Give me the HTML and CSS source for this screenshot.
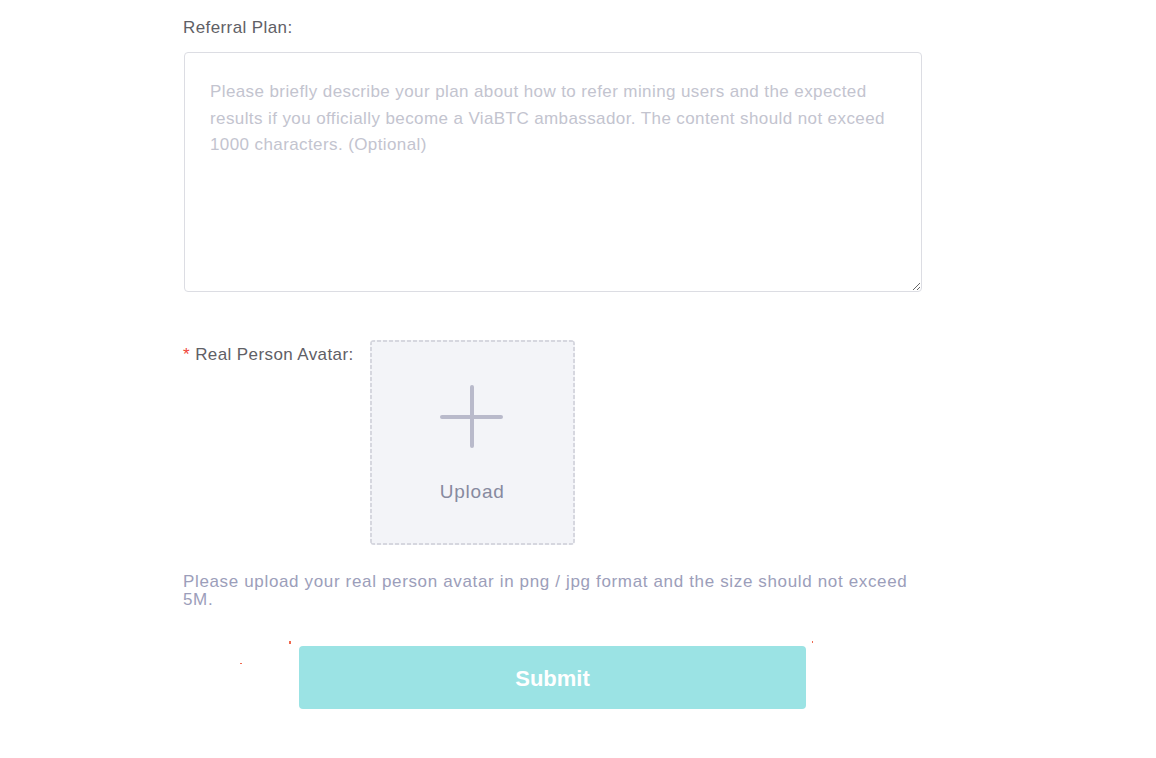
FILE: index.html
```html
<!DOCTYPE html>
<html>
<head>
<meta charset="utf-8">
<link rel="stylesheet" href="styles.css">
</head>
<body>
<div class="form">
  <div class="field">
    <div class="label">Referral Plan:</div>
    <textarea class="plan" placeholder="Please briefly describe your plan about how to refer mining users and the expected results if you officially become a ViaBTC ambassador. The content should not exceed 1000 characters. (Optional)"></textarea>
  </div>
  <div class="avatar-row">
    <div class="label"><span class="req">*</span> Real Person Avatar:</div>
    <div class="upload">
      <svg class="plus" width="64" height="64" viewBox="0 0 64 64"><path d="M32 2 V61 M2 32 H61" stroke="#b9bacb" stroke-width="4" stroke-linecap="round" fill="none"/></svg>
      <div class="upload-text">Upload</div>
    </div>
  </div>
  <p class="hint">Please upload your real person avatar in png / jpg format and the size should not exceed 5M.</p>
  <div class="actions">
    <span class="dot d1"></span><span class="dot d2"></span><span class="dot d3"></span><span class="dot d4"></span>
    <button class="submit">Submit</button>
  </div>
</div>
</body>
</html>
```
FILE: styles.css
```css
html, body { margin: 0; padding: 0; background: #fff; }
body { font-family: "Liberation Sans", Arial, sans-serif; }
.form { width: 738px; margin-left: 183px; padding-top: 17px; }
.label { font-size: 17px; letter-spacing: 0.4px; color: #5f6066; line-height: 22px; }
.field .label { margin-bottom: 13px; }
.plan {
  display: block; box-sizing: border-box; width: 738px; height: 240px;
  margin-left: 1px; border: 1px solid #dcdde3; border-radius: 4px;
  padding: 26px 25px; font-family: inherit; font-size: 17px; letter-spacing: 0.4px; line-height: 26.5px;
  color: #333; resize: vertical; outline: none;
}
.plan::placeholder { color: #c3c4cf; }
.avatar-row { display: flex; align-items: flex-start; margin-top: 48px; gap: 16px; }
.avatar-row .label { margin-top: 4px; }
.req { color: #f0443a; }
.upload {
  box-sizing: border-box; width: 205px; height: 205px; border-radius: 4px;
  background-color: #f3f4f8;
  background-image:
    linear-gradient(90deg, #d6d7df 4px, transparent 4px),
    linear-gradient(90deg, #d6d7df 4px, transparent 4px),
    linear-gradient(180deg, #d6d7df 4px, transparent 4px),
    linear-gradient(180deg, #d6d7df 4px, transparent 4px);
  background-size: 6px 2px, 6px 2px, 2px 6px, 2px 6px;
  background-position: 1px 0, 1px 100%, 0 1px, 100% 1px;
  background-repeat: repeat-x, repeat-x, repeat-y, repeat-y;
  display: flex; flex-direction: column; align-items: center;
}
.plus { margin-top: 45px; }
.upload-text { margin-top: 32px; font-size: 19px; letter-spacing: 0.8px; color: #878aa0; }
.hint { margin: 28px 0 0; font-size: 17px; letter-spacing: 0.65px; line-height: 18px; color: #9c9eba; width: 737px; }
.actions { position: relative; display: flex; margin-top: 37px; padding-left: 116px; }
.submit {
  width: 507px; height: 63px; border: none; border-radius: 4px; background: #9be3e4;
  padding: 3px 0 0; color: #fff; font-family: inherit; font-size: 22px; font-weight: bold; cursor: pointer;
}
.dot { position: absolute; width: 2px; height: 2px; background: #f06a50; }
.d1 { left: 106px; top: -5px; height: 3px; }
.d2 { left: 57px; top: 17px; width: 2px; height: 1px; }
.d3 { left: 106px; top: 69px; height: 1px; }
.d4 { left: 629px; top: -5px; width: 1px; }
```
